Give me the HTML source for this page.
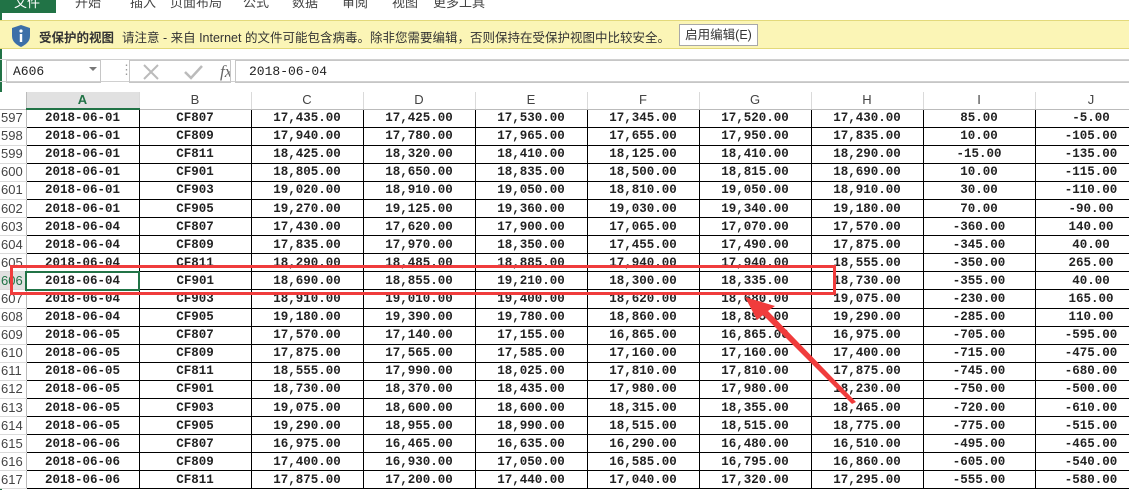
<!DOCTYPE html>
<html><head><meta charset="utf-8"><style>
*{margin:0;padding:0;box-sizing:border-box}
body{width:1129px;height:490px;overflow:hidden;background:#fff;position:relative;font-family:"Liberation Sans","Noto Sans CJK SC",sans-serif}
.menu{position:absolute;top:0;left:0;width:1129px;height:13px;background:#fff;overflow:hidden}
.menu span{position:absolute;top:-8px;font-size:13px;color:#444}
.file{position:absolute;left:0;top:0;width:56px;height:13px;background:#217346}
.bar{position:absolute;top:20px;left:0;width:1129px;height:29px;background:#fbf5b6;border-top:1px solid #e3d97a;border-bottom:1px solid #e3d97a}
.bar .t{position:absolute;top:6px;font-size:12.5px;color:#333}
.btn{position:absolute;left:679px;top:3px;width:79px;height:22px;border:1px solid #a8a8a8;background:#fff;font-size:12.5px;text-align:center;line-height:20px;color:#333}
.fb{position:absolute;top:59px;left:0;width:1129px;height:23px;border-top:1px solid #d0d0d0;border-bottom:1px solid #d0d0d0}
.nb{position:absolute;left:6px;top:0;width:95px;height:23px;border:1px solid #c6c6c6;font-family:"Liberation Mono",monospace;font-size:13px;padding:3px 0 0 6px;color:#222}
table{position:absolute;left:0;top:92px;width:1147px;border-collapse:collapse;table-layout:fixed}
td{height:18.1px;padding:0;text-align:center;font-family:"Liberation Mono",monospace;font-weight:bold;font-size:12.5px;color:#222;border:1px solid #000;white-space:nowrap;overflow:hidden;line-height:16px}
tr.h td{height:17px;background:#fff;font-family:"Liberation Sans",sans-serif;font-weight:normal;font-size:13px;color:#444;border:none;border-right:1px solid #dadada;border-bottom:1px solid #bbb}
td.r{font-family:"Liberation Sans",sans-serif;font-weight:normal;font-size:13px;color:#444;background:#fff;border:none;border-right:1px solid #bbb;border-bottom:1px solid #dadada;text-align:left;padding-left:1px}
</style></head><body>
<div class="menu"><div class="file"></div><span style="left:14px;color:#fff">文件</span><span style="left:75px">开始</span><span style="left:130px">插入</span><span style="left:170px">页面布局</span><span style="left:243px">公式</span><span style="left:292px">数据</span><span style="left:342px">审阅</span><span style="left:392px">视图</span><span style="left:433px">更多工具</span></div>
<div style="position:absolute;left:0;top:0;width:2px;height:490px;background:#217346"></div>
<div class="bar">
<svg style="position:absolute;left:10px;top:3px" width="22" height="24" viewBox="0 0 22 24"><path d="M11 1 L20 4 V12 C20 18 15 21 11 23 C7 21 2 18 2 12 V4 Z" fill="#3d6fa8"/><circle cx="11" cy="7" r="1.6" fill="#fff"/><rect x="9.8" y="10" width="2.4" height="8" fill="#fff"/></svg>
<span class="t" style="left:39px;font-weight:bold">受保护的视图</span>
<span class="t" style="left:122px">请注意 - 来自 Internet 的文件可能包含病毒。除非您需要编辑，否则保持在受保护视图中比较安全。</span>
<div class="btn">启用编辑(E)</div>
</div>
<div class="fb">
<div class="nb">A606</div>
<span style="position:absolute;left:89px;top:7px;border-left:4px solid transparent;border-right:4px solid transparent;border-top:4px solid #777"></span>
<span style="position:absolute;left:120px;top:2px;color:#999;font-size:13px">⋮</span>
<div style="position:absolute;left:129px;top:0;width:102px;height:23px;border:1px solid #c6c6c6"></div>
<svg style="position:absolute;left:140px;top:3px" width="90" height="18"><path d="M4 2 L18 16 M18 2 L4 16" stroke="#bbb" stroke-width="2"/><path d="M45 9 L51 15 L62 3" stroke="#bbb" stroke-width="2.5" fill="none"/><text x="80" y="14" font-family="Liberation Serif,serif" font-style="italic" font-size="17" fill="#666">fx</text></svg>
<div style="position:absolute;left:235px;top:0;width:900px;height:23px;border:1px solid #c6c6c6;border-right:none;font-family:'Liberation Mono',monospace;font-size:13px;padding:3px 0 0 13px;color:#222">2018-06-04</div>
</div>
<table>
<colgroup><col style="width:26px"><col style="width:113px"><col style="width:112px"><col style="width:112px"><col style="width:112px"><col style="width:112px"><col style="width:112px"><col style="width:112px"><col style="width:112px"><col style="width:112px"><col style="width:112px"></colgroup>
<tr class="h"><td style="border-right:1px solid #bbb"></td><td style="background:#e1e1e1;color:#217346;font-weight:bold;border-bottom:2px solid #217346">A</td><td>B</td><td>C</td><td>D</td><td>E</td><td>F</td><td>G</td><td>H</td><td>I</td><td>J</td></tr>
<tr><td class="r">597</td><td>2018-06-01</td><td>CF807</td><td>17,435.00</td><td>17,425.00</td><td>17,530.00</td><td>17,345.00</td><td>17,520.00</td><td>17,430.00</td><td>85.00</td><td>-5.00</td></tr>
<tr><td class="r">598</td><td>2018-06-01</td><td>CF809</td><td>17,940.00</td><td>17,780.00</td><td>17,965.00</td><td>17,655.00</td><td>17,950.00</td><td>17,835.00</td><td>10.00</td><td>-105.00</td></tr>
<tr><td class="r">599</td><td>2018-06-01</td><td>CF811</td><td>18,425.00</td><td>18,320.00</td><td>18,410.00</td><td>18,125.00</td><td>18,410.00</td><td>18,290.00</td><td>-15.00</td><td>-135.00</td></tr>
<tr><td class="r">600</td><td>2018-06-01</td><td>CF901</td><td>18,805.00</td><td>18,650.00</td><td>18,835.00</td><td>18,500.00</td><td>18,815.00</td><td>18,690.00</td><td>10.00</td><td>-115.00</td></tr>
<tr><td class="r">601</td><td>2018-06-01</td><td>CF903</td><td>19,020.00</td><td>18,910.00</td><td>19,050.00</td><td>18,810.00</td><td>19,050.00</td><td>18,910.00</td><td>30.00</td><td>-110.00</td></tr>
<tr><td class="r">602</td><td>2018-06-01</td><td>CF905</td><td>19,270.00</td><td>19,125.00</td><td>19,360.00</td><td>19,030.00</td><td>19,340.00</td><td>19,180.00</td><td>70.00</td><td>-90.00</td></tr>
<tr><td class="r">603</td><td>2018-06-04</td><td>CF807</td><td>17,430.00</td><td>17,620.00</td><td>17,900.00</td><td>17,065.00</td><td>17,070.00</td><td>17,570.00</td><td>-360.00</td><td>140.00</td></tr>
<tr><td class="r">604</td><td>2018-06-04</td><td>CF809</td><td>17,835.00</td><td>17,970.00</td><td>18,350.00</td><td>17,455.00</td><td>17,490.00</td><td>17,875.00</td><td>-345.00</td><td>40.00</td></tr>
<tr><td class="r">605</td><td>2018-06-04</td><td>CF811</td><td>18,290.00</td><td>18,485.00</td><td>18,885.00</td><td>17,940.00</td><td>17,940.00</td><td>18,555.00</td><td>-350.00</td><td>265.00</td></tr>
<tr><td class="r" style="background:#e1e1e1;color:#217346">606</td><td style="border:2px solid #217346">2018-06-04</td><td>CF901</td><td>18,690.00</td><td>18,855.00</td><td>19,210.00</td><td>18,300.00</td><td>18,335.00</td><td>18,730.00</td><td>-355.00</td><td>40.00</td></tr>
<tr><td class="r">607</td><td>2018-06-04</td><td>CF903</td><td>18,910.00</td><td>19,010.00</td><td>19,400.00</td><td>18,620.00</td><td>18,680.00</td><td>19,075.00</td><td>-230.00</td><td>165.00</td></tr>
<tr><td class="r">608</td><td>2018-06-04</td><td>CF905</td><td>19,180.00</td><td>19,390.00</td><td>19,780.00</td><td>18,860.00</td><td>18,895.00</td><td>19,290.00</td><td>-285.00</td><td>110.00</td></tr>
<tr><td class="r">609</td><td>2018-06-05</td><td>CF807</td><td>17,570.00</td><td>17,140.00</td><td>17,155.00</td><td>16,865.00</td><td>16,865.00</td><td>16,975.00</td><td>-705.00</td><td>-595.00</td></tr>
<tr><td class="r">610</td><td>2018-06-05</td><td>CF809</td><td>17,875.00</td><td>17,565.00</td><td>17,585.00</td><td>17,160.00</td><td>17,160.00</td><td>17,400.00</td><td>-715.00</td><td>-475.00</td></tr>
<tr><td class="r">611</td><td>2018-06-05</td><td>CF811</td><td>18,555.00</td><td>17,990.00</td><td>18,025.00</td><td>17,810.00</td><td>17,810.00</td><td>17,875.00</td><td>-745.00</td><td>-680.00</td></tr>
<tr><td class="r">612</td><td>2018-06-05</td><td>CF901</td><td>18,730.00</td><td>18,370.00</td><td>18,435.00</td><td>17,980.00</td><td>17,980.00</td><td>18,230.00</td><td>-750.00</td><td>-500.00</td></tr>
<tr><td class="r">613</td><td>2018-06-05</td><td>CF903</td><td>19,075.00</td><td>18,600.00</td><td>18,600.00</td><td>18,315.00</td><td>18,355.00</td><td>18,465.00</td><td>-720.00</td><td>-610.00</td></tr>
<tr><td class="r">614</td><td>2018-06-05</td><td>CF905</td><td>19,290.00</td><td>18,955.00</td><td>18,990.00</td><td>18,515.00</td><td>18,515.00</td><td>18,775.00</td><td>-775.00</td><td>-515.00</td></tr>
<tr><td class="r">615</td><td>2018-06-06</td><td>CF807</td><td>16,975.00</td><td>16,465.00</td><td>16,635.00</td><td>16,290.00</td><td>16,480.00</td><td>16,510.00</td><td>-495.00</td><td>-465.00</td></tr>
<tr><td class="r">616</td><td>2018-06-06</td><td>CF809</td><td>17,400.00</td><td>16,930.00</td><td>17,050.00</td><td>16,585.00</td><td>16,795.00</td><td>16,860.00</td><td>-605.00</td><td>-540.00</td></tr>
<tr><td class="r">617</td><td>2018-06-06</td><td>CF811</td><td>17,875.00</td><td>17,200.00</td><td>17,440.00</td><td>17,040.00</td><td>17,320.00</td><td>17,295.00</td><td>-555.00</td><td>-580.00</td></tr>
</table>
<div style="position:absolute;left:10px;top:265px;width:826px;height:30px;border:3px solid #f03c3c"></div>
<svg style="position:absolute;left:0;top:0" width="1129" height="490"><path d="M745 297 L775 306 L768 311 L856 402 L852 404 L763 315 L757 320 Z" fill="#f03c3c"/></svg>
</body></html>
